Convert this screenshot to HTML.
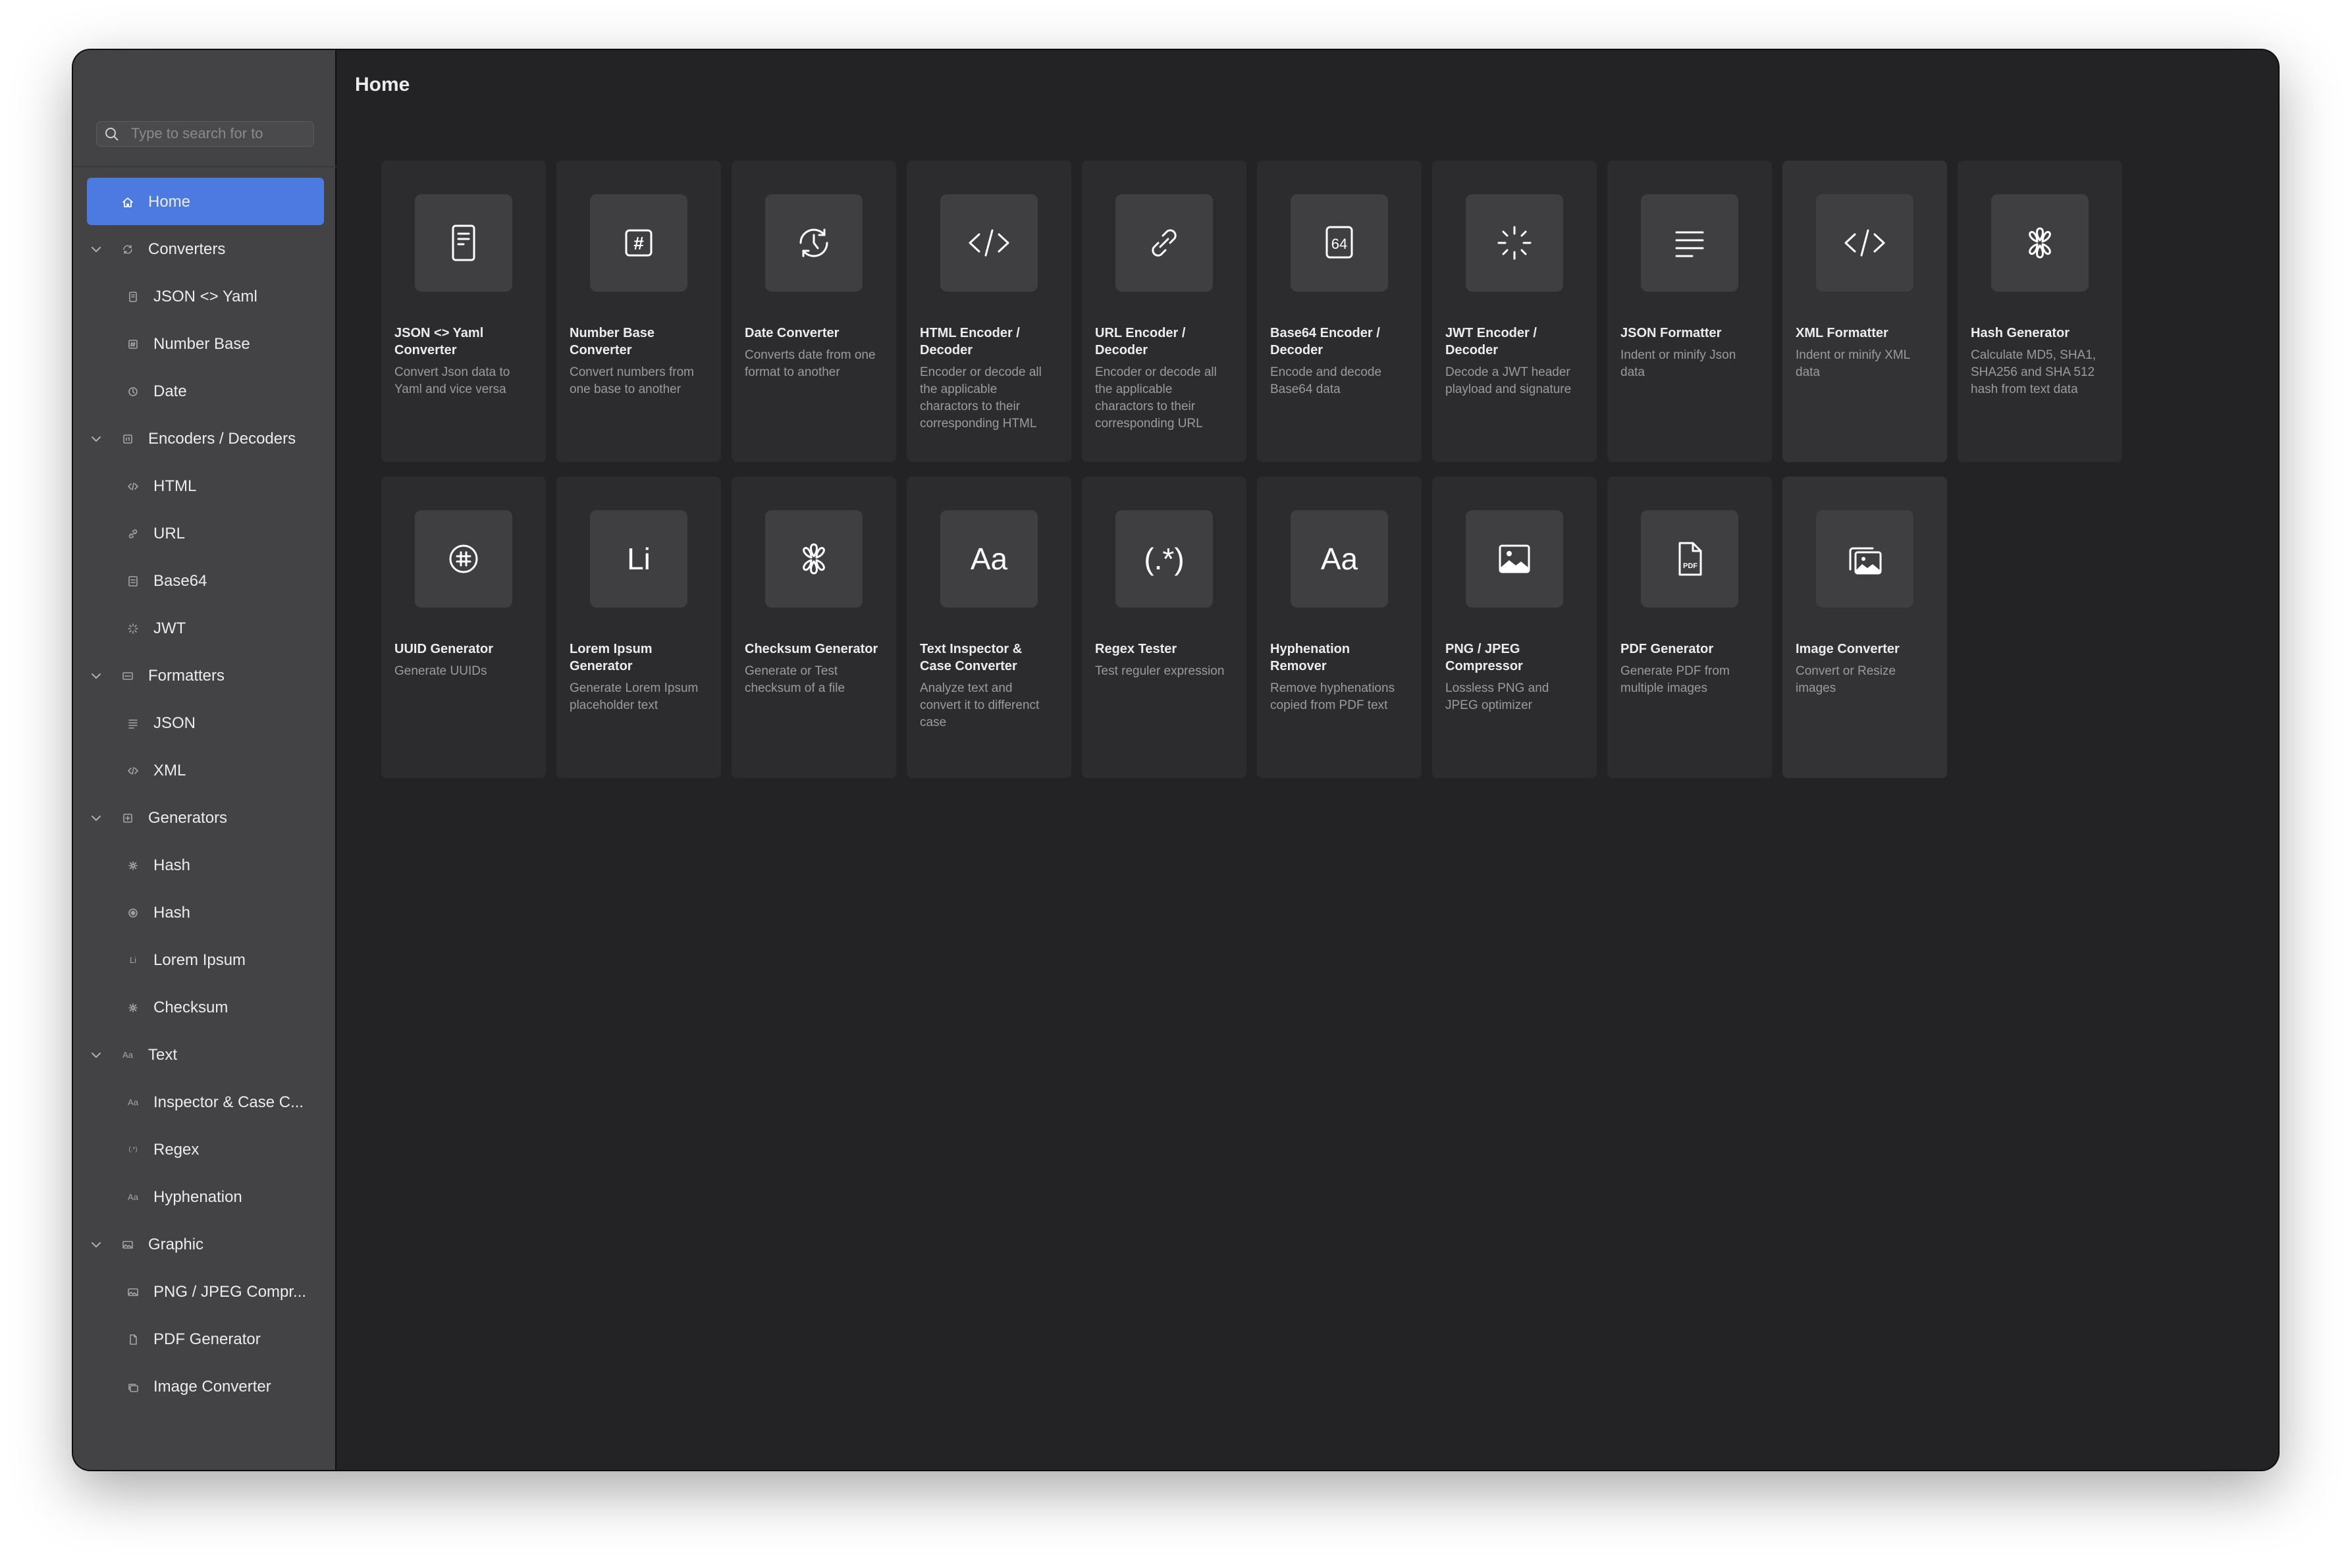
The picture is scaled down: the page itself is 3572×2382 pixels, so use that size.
<!DOCTYPE html>
<html><head><meta charset="utf-8">
<style>
*{box-sizing:border-box;margin:0;padding:0}
html,body{width:3572px;height:2382px;background:#fff;overflow:hidden;font-family:"Liberation Sans",sans-serif}
.win{position:absolute;left:111px;top:76px;width:3349px;height:2157px;border-radius:26px;background:#232325;overflow:hidden;box-shadow:0 30px 90px rgba(0,0,0,.35),0 0 0 2px #111}
.side{position:absolute;left:0;top:0;width:400px;height:100%;background:#434345;border-right:2px solid #111}
.dot{position:absolute;top:116px;width:25px;height:25px;border-radius:50%}
.search{position:absolute;left:35px;top:108px;width:331px;height:39px;border:1.5px solid #5c5c5e;border-radius:8px;background:#4a4a4c;color:#8a8a8c;font-size:22px;line-height:36px;padding-left:52px;white-space:nowrap;overflow:hidden}
.divider{position:absolute;left:0;top:176px;width:400px;height:2px;background:#38383a}
.hl{position:absolute;left:21px;top:194px;width:360px;height:72px;background:#4d7ae0;border-radius:7px}
.row{position:absolute;height:40px;line-height:40px;color:#ececee;font-size:24px;white-space:nowrap}
.ic{position:absolute;width:20px;height:20px}
.chev{position:absolute}
.title{position:absolute;left:428px;top:33px;color:#ececee;font-size:30px;font-weight:bold;line-height:40px}
.card{position:absolute;width:250px;height:458px;background:#2c2c2e;border-radius:8px}
.card.lt{background:#333336}
.ib{position:absolute;left:51px;top:51px;width:148px;height:148px;background:#3f3f41;border-radius:10px;display:flex;align-items:center;justify-content:center;color:#fff}
.ct{position:absolute;left:20px;top:249px;width:206px;color:#ececee;font-size:20px;font-weight:bold;line-height:26px}
.cd{color:#9b9b9d;font-weight:normal;font-size:19px;line-height:26px;margin-top:8px}
.g{font-size:46px;font-family:"Liberation Sans",sans-serif}
</style></head><body>
<div class="win">
<div class="side">
<div class="dot" style="left:41px;background:#ec6a5e"></div>
<div class="dot" style="left:81px;background:#f4bf4f"></div>
<div class="dot" style="left:121px;background:#61c554"></div>
<div class="search">Type to search for to</div>
<svg style="position:absolute;left:47px;top:116px" width="24" height="24" viewBox="0 0 24 24" fill="none" stroke="#d0d0d2" stroke-width="2"><circle cx="10" cy="10" r="7"/><path d="M15 15l6 6"/></svg>
<div class="divider"></div>
<div class="hl"></div>
</div>
<div class="title">Home</div>
</div>
<script>
const W={x:111,y:76};
const sa='fill="none" stroke="#a5a5a7" stroke-width="1.6" stroke-linecap="round" stroke-linejoin="round"';
const sw='fill="none" stroke="#fff" stroke-width="1.8" stroke-linecap="round" stroke-linejoin="round"';
const si=(k,s)=>{const m={
home:`<path d="M3 10l7-6 7 6M5 9v8h4v-4h2v4h4V9" ${s}/>`,
conv:`<path d="M4 10a6 6 0 0 1 11-3M16 10a6 6 0 0 1-11 3M15 4v3h-3M5 16v-3h3" ${s}/>`,
doc:`<rect x="5" y="3" width="10" height="14" rx="1.5" ${s}/><path d="M8 7h4M8 10h4" ${s}/>`,
hash:`<rect x="4" y="4" width="12" height="12" rx="1.5" ${s}/><path d="M8.5 7l-1 6M12 7l-1 6M7 9h6M6.5 11.5h6" ${s}/>`,
clock:`<circle cx="10" cy="10" r="6" ${s}/><path d="M10 6v4l2 2" ${s}/>`,
enc:`<rect x="4" y="4" width="12" height="12" rx="1.5" ${s}/><path d="M8 8v4M11 8h1v4" ${s}/>`,
code:`<path d="M7 6l-4 4 4 4M13 6l4 4-4 4M11 5l-2 10" ${s}/>`,
link:`<path d="M8 12l4-4M7 10l-2 2a2.5 2.5 0 0 0 3.5 3.5l2-2M13 10l2-2a2.5 2.5 0 0 0-3.5-3.5l-2 2" ${s}/>`,
b64:`<rect x="4" y="3" width="12" height="14" rx="1.5" ${s}/><path d="M7 8h6M7 12h6" ${s}/>`,
jwt:`<path d="M10 3v3M10 14v3M3 10h3M14 10h3M5 5l2 2M13 13l2 2M5 15l2-2M13 7l2-2" ${s}/>`,
fmt:`<rect x="3" y="5" width="14" height="10" rx="1.5" ${s}/><path d="M6 10h8" ${s}/>`,
lines:`<path d="M4 5h12M4 9h12M4 13h12M4 17h7" ${s}/>`,
gen:`<rect x="4" y="4" width="12" height="12" rx="1.5" ${s}/><path d="M10 7v6M7 10h6" ${s}/>`,
flower:`<circle cx="10" cy="10" r="2" ${s}/><path d="M10 8V4M10 12v4M8 10H4M12 10h4M8.5 8.5l-3-3M11.5 11.5l3 3M8.5 11.5l-3 3M11.5 8.5l3-3" ${s}/>`,
uuid:`<circle cx="10" cy="10" r="6" ${s}/><path d="M9 7v6M11 7v6M7 9h6M7 11h6" ${s}/>`,
img:`<rect x="3" y="5" width="14" height="10" rx="1.5" ${s}/><path d="M3 14l4-4 3 3 2-2 5 4" ${s}/>`,
pdf:`<path d="M6 3h6l3 3v11H6zM12 3v3h3" ${s}/>`,
imgc:`<path d="M4 14V6h10" ${s}/><rect x="6" y="8" width="11" height="9" rx="1.5" ${s}/>`};
return `<svg viewBox="0 0 20 20" width="20" height="20">${m[k]}</svg>`;};
const tx=(t,c)=>`<span style="position:absolute;left:0;top:0;width:20px;line-height:20px;text-align:center;font-size:${t.length>2?10:13}px;color:${c||'#a5a5a7'}">${t}</span>`;
const items=[
['home','home','Home'],['g','conv','Converters'],['c','doc','JSON <> Yaml'],['c','hash','Number Base'],['c','clock','Date'],
['g','enc','Encoders / Decoders'],['c','code','HTML'],['c','link','URL'],['c','b64','Base64'],['c','jwt','JWT'],
['g','fmt','Formatters'],['c','lines','JSON'],['c','code','XML'],
['g','gen','Generators'],['c','flower','Hash'],['c','uuid','Hash'],['c','#Li','Lorem Ipsum'],['c','flower','Checksum'],
['g','#Aa','Text'],['c','#Aa','Inspector & Case C...'],['c','#(.*)','Regex'],['c','#Aa','Hyphenation'],
['g','img','Graphic'],['c','img','PNG / JPEG Compr...'],['c','pdf','PDF Generator'],['c','imgc','Image Converter']];
let h='';
items.forEach((it,i)=>{
 const cy=307+72*i-W.y; const top=cy-20;
 const ik=(c)=>it[1][0]=='#'?tx(it[1].slice(1),c):si(it[1],c?sw:sa);
 if(it[0]=='home'){h+=`<div class="ic" style="left:73px;top:${cy-10}px">${ik('#fff')}</div><div class="row" style="left:114px;top:${top}px">${it[2]}</div>`;}
 else if(it[0]=='g'){h+=`<svg class="chev" style="left:26px;top:${cy-8}px" width="18" height="16" viewBox="0 0 18 16"><path d="M3 5l6 6 6-6" fill="none" stroke="#b0b0b2" stroke-width="2" stroke-linecap="round"/></svg><div class="ic" style="left:73px;top:${cy-10}px">${ik()}</div><div class="row" style="left:114px;top:${top}px">${it[2]}</div>`;}
 else{h+=`<div class="ic" style="left:81px;top:${cy-10}px">${ik()}</div><div class="row" style="left:122px;top:${top}px">${it[2]}</div>`;}
});
document.querySelector('.side').insertAdjacentHTML('beforeend',h);
const S='stroke="#fff" stroke-width="3" fill="none" stroke-linecap="round" stroke-linejoin="round"';
const I={
doc:`<svg width="44" height="60" viewBox="0 0 44 60"><rect x="6" y="4" width="32" height="52" rx="4" ${S}/><path d="M14 16h16M14 24h16M14 32h8" ${S}/></svg>`,
hash:`<svg width="50" height="50" viewBox="0 0 50 50"><rect x="6" y="6" width="38" height="38" rx="5" ${S}/><text x="25" y="35" font-size="28" font-weight="bold" fill="#fff" text-anchor="middle" font-family="Liberation Sans">#</text></svg>`,
date:`<svg width="60" height="60" viewBox="0 0 60 60"><path d="M10 30a20 20 0 0 1 36-12M50 30a20 20 0 0 1-36 12" ${S}/><path d="M46 10v8h-8M14 50v-8h8" ${S}/><path d="M30 18v12l6 8" ${S}/></svg>`,
code:`<svg width="70" height="50" viewBox="0 0 70 50"><path d="M20 12L6 25l14 13M50 12l14 13-14 13M40 6L30 44" ${S}/></svg>`,
link:`<svg width="60" height="60" viewBox="0 0 60 60"><path d="M24 36l12-12M21 30l-7 7a8 8 0 0 0 11 11l7-7M39 30l7-7a8 8 0 0 0-11-11l-7 7" ${S}/></svg>`,
b64:`<svg width="50" height="60" viewBox="0 0 50 60"><rect x="6" y="6" width="38" height="46" rx="5" ${S}/><text x="25" y="39" font-size="22" fill="#fff" text-anchor="middle" font-family="Liberation Sans">64</text></svg>`,
jwt:`<svg width="60" height="60" viewBox="0 0 60 60"><path d="M30 6v10M30 44v10M6 30h10M44 30h10M13 13l6 6M41 41l6 6M13 47l6-6M41 19l6-6" ${S}/></svg>`,
lines:`<svg width="60" height="60" viewBox="0 0 60 60"><path d="M10 14h40M10 26h40M10 38h40M10 50h24" ${S}/></svg>`,
flower:`<svg width="60" height="60" viewBox="0 0 60 60"><path d="M30 26c-6-8-6-18 0-18s6 10 0 18zM30 34c-6 8-6 18 0 18s6-10 0-18zM26 28c-9-3-14-11-10-14s10 5 10 14zM34 28c9-3 14-11 10-14s-10 5-10 14zM26 32c-9 3-14 11-10 14s10-5 10-14zM34 32c9 3 14 11 10 14s-10-5-10-14z" ${S}/></svg>`,
uuid:`<svg width="60" height="60" viewBox="0 0 60 60"><circle cx="30" cy="30" r="20" ${S}/><path d="M26 20v20M34 20v20M20 26h20M20 34h20" ${S}/></svg>`,
img:`<svg width="60" height="60" viewBox="0 0 60 60"><rect x="8" y="10" width="44" height="40" rx="3" ${S}/><circle cx="22" cy="22" r="4" fill="#fff"/><path d="M8 44l14-12 10 8 8-6 12 10v6H8z" fill="#fff"/></svg>`,
pdf:`<svg width="50" height="60" viewBox="0 0 50 60"><path d="M10 6h20l12 12v36H10z M30 6v12h12" ${S}/><text x="26" y="44" font-size="11" font-weight="bold" fill="#fff" text-anchor="middle" font-family="Liberation Sans">PDF</text></svg>`,
imgc:`<svg width="64" height="60" viewBox="0 0 64 60"><path d="M10 46V18a4 4 0 0 1 4-4h30" ${S}/><rect x="18" y="20" width="38" height="32" rx="3" ${S}/><circle cx="30" cy="30" r="3" fill="#fff"/><path d="M18 48l10-10 8 6 8-6 12 10v4H18z" fill="#fff"/></svg>`,
txt:t=>`<span class="g">${t}</span>`
};
const cards=[
['doc','JSON <> Yaml Converter','Convert Json data to Yaml and vice versa'],
['hash','Number Base Converter','Convert numbers from one base to another'],
['date','Date Converter','Converts date from one format to another'],
['code','HTML Encoder / Decoder','Encoder or decode all the applicable charactors to their corresponding HTML'],
['link','URL Encoder / Decoder','Encoder or decode all the applicable charactors to their corresponding URL'],
['b64','Base64 Encoder / Decoder','Encode and decode Base64 data'],
['jwt','JWT Encoder / Decoder','Decode a JWT header playload and signature'],
['lines','JSON Formatter','Indent or minify Json data'],
['code','XML Formatter','Indent or minify XML data',1],
['flower','Hash Generator','Calculate MD5, SHA1, SHA256 and SHA 512 hash from text data'],
['uuid','UUID Generator','Generate UUIDs'],
['Li','Lorem Ipsum Generator','Generate Lorem Ipsum placeholder text'],
['flower','Checksum Generator','Generate or Test checksum of a file'],
['Aa','Text Inspector & Case Converter','Analyze text and convert it to differenct case'],
['(.*)','Regex Tester','Test reguler expression'],
['Aa','Hyphenation Remover','Remove hyphenations copied from PDF text'],
['img','PNG / JPEG Compressor','Lossless PNG and JPEG optimizer'],
['pdf','PDF Generator','Generate PDF from multiple images'],
['imgc','Image Converter','Convert or Resize images',1]];
let c='';
cards.forEach((k,i)=>{
 const col=i<10?i:i-10,row=i<10?0:1;
 const x=579+266*col-W.x,y=244+480*row-W.y;
 const icon=I[k[0]]?I[k[0]]:I.txt(k[0]);
 c+=`<div class="card${k[3]?' lt':''}" style="left:${x}px;top:${y}px"><div class="ib">${icon}</div><div class="ct">${k[1]}<div class="cd">${k[2]}</div></div></div>`;
});
document.querySelector('.win').insertAdjacentHTML('beforeend',c);
</script>
</body></html>
